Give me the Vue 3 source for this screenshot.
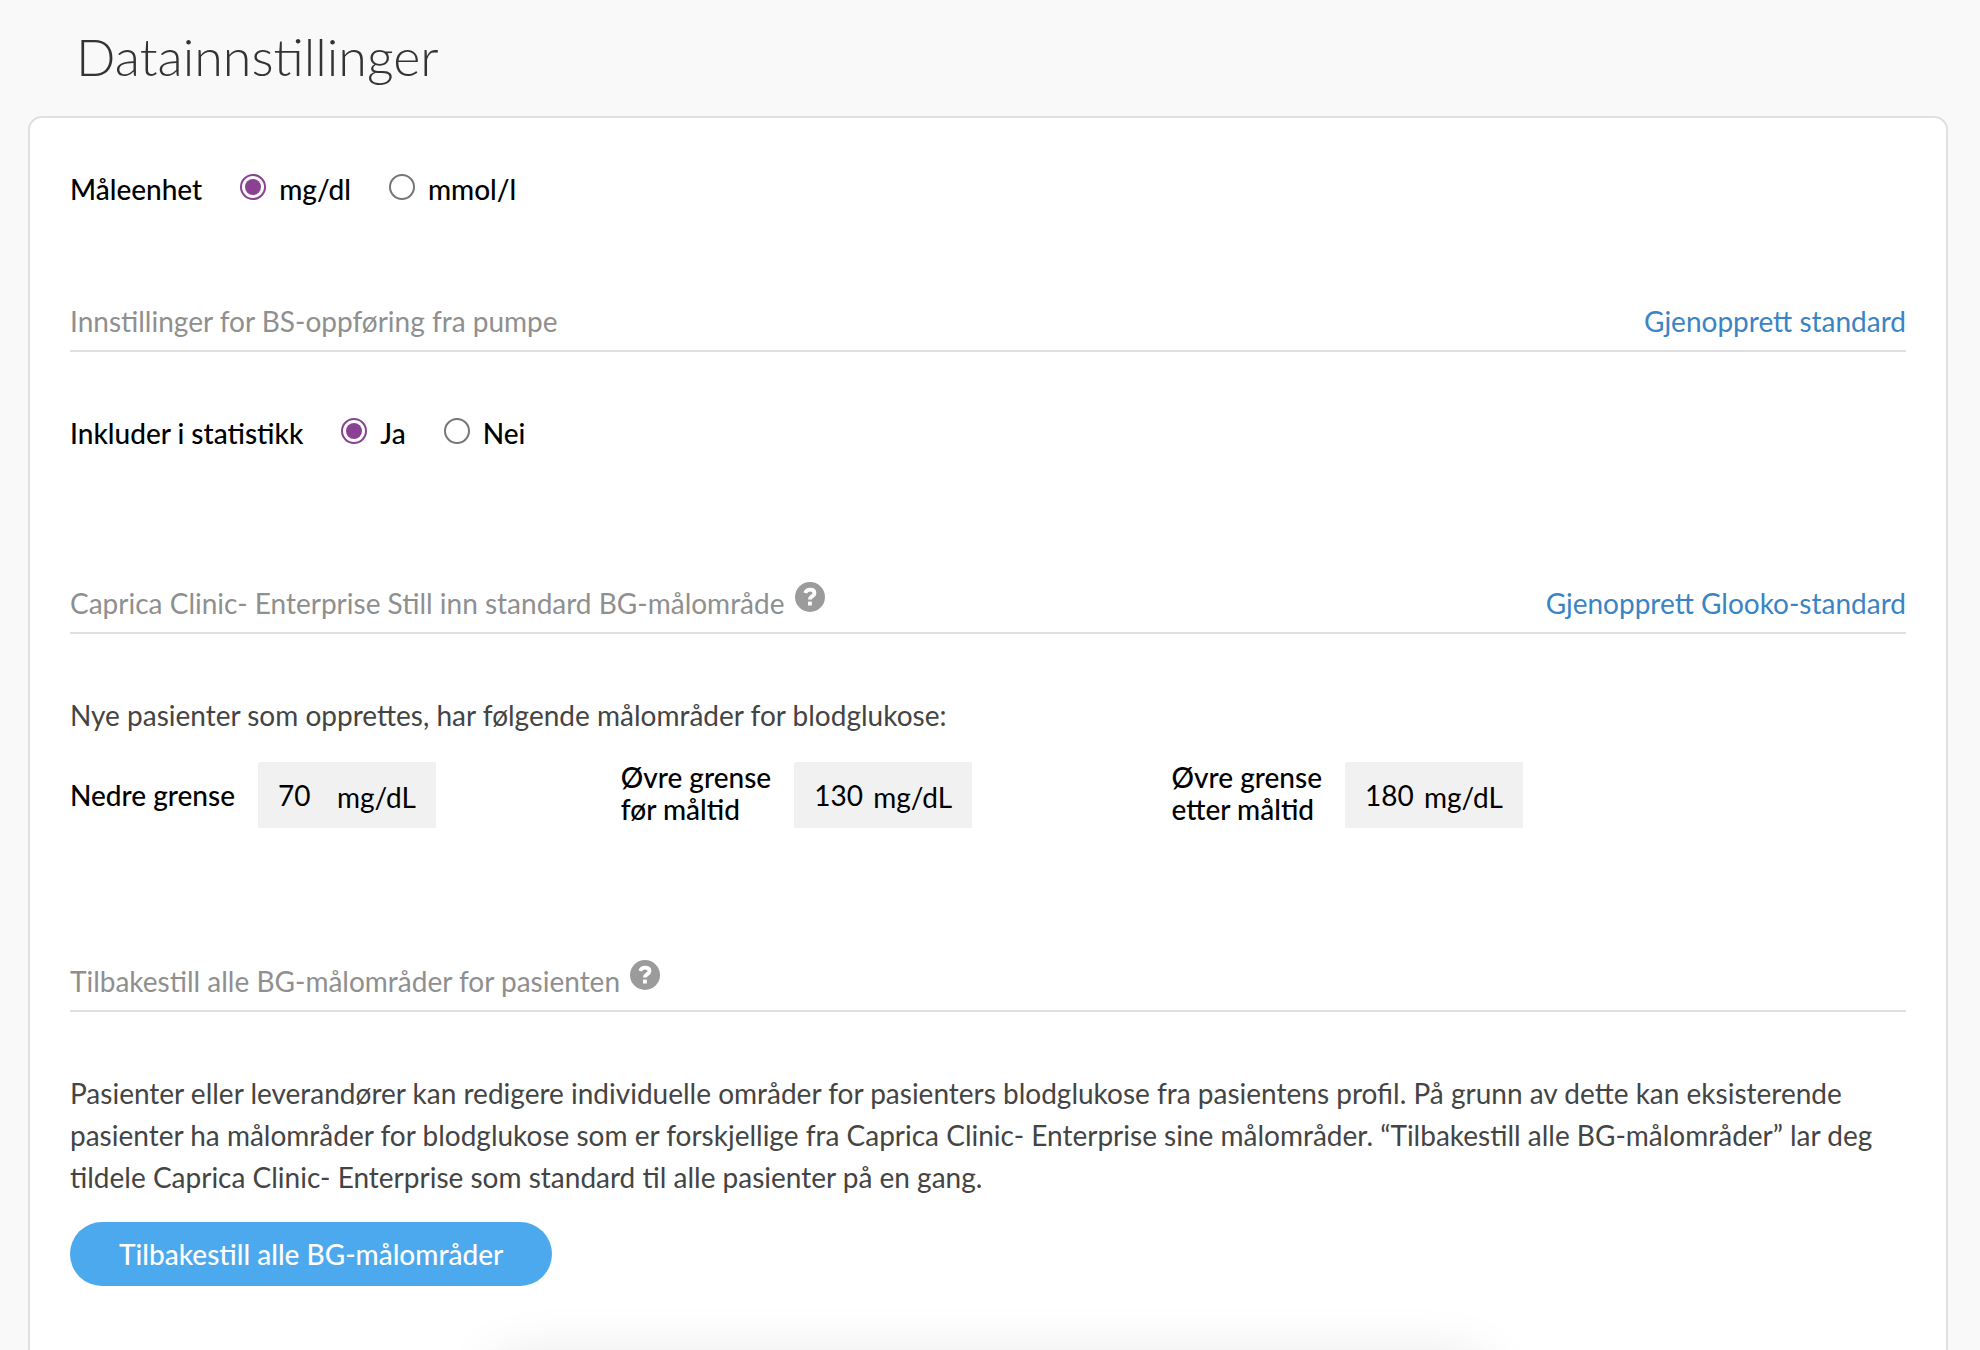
<script setup>
import { ref } from 'vue'

const unit = ref('mgdl')
const include = ref('ja')

const limits = ref([
  { id: 'lower', lines: ['Nedre grense'], value: '70' },
  { id: 'before', lines: ['Øvre grense', 'før måltid'], value: '130' },
  { id: 'after', lines: ['Øvre grense', 'etter måltid'], value: '180' }
])
</script>

<template>
  <div class="page">
    <h1 class="title">Datainnstillinger</h1>

    <main class="card">
      <div class="choices" role="radiogroup" aria-labelledby="unit-name">
        <span id="unit-name">Måleenhet</span>
        <label class="choice"><input v-model="unit" type="radio" name="unit" value="mgdl" />mg/dl</label>
        <label class="choice"><input v-model="unit" type="radio" name="unit" value="mmoll" />mmol/l</label>
      </div>

      <section class="section pump">
        <header class="section-head">
          <h2>Innstillinger for BS-oppføring fra pumpe</h2>
          <a href="#">Gjenopprett standard</a>
        </header>
        <div class="choices" role="radiogroup" aria-labelledby="include-name">
          <span id="include-name">Inkluder i statistikk</span>
          <label class="choice"><input v-model="include" type="radio" name="include" value="ja" />Ja</label>
          <label class="choice"><input v-model="include" type="radio" name="include" value="nei" />Nei</label>
        </div>
      </section>

      <section class="section">
        <header class="section-head">
          <h2>Caprica Clinic- Enterprise Still inn standard BG-målområde</h2>
          <button class="help" type="button" aria-label="Hjelp">
            <svg viewBox="0 0 30 30" aria-hidden="true">
              <circle cx="15" cy="15" r="15" fill="#9b9b9b" />
              <path d="M10.300 11C10.900 8.700 12.600 7.700 15 7.700c2.700 0 4.500 1.300 4.500 3.500 0 3-4.600 3-4.600 6.300" fill="none" stroke="#fff" stroke-width="3.800" />
              <path d="M13 19.600h3.900v3.900H13z" fill="#fff" />
            </svg>
          </button>
          <a href="#">Gjenopprett Glooko-standard</a>
        </header>
        <p class="text">Nye pasienter som opprettes, har følgende målområder for blodglukose:</p>
        <div class="limits">
          <div v-for="limit in limits" :key="limit.id" class="limit">
            <label :for="limit.id" :class="{ stacked: limit.lines.length > 1 }">
              <span v-for="line in limit.lines" :key="line">{{ line }}</span>
            </label>
            <div class="field">
              <input :id="limit.id" v-model="limit.value" type="text" inputmode="numeric" />
              <span class="unit">mg/dL</span>
            </div>
          </div>
        </div>
      </section>

      <section class="section">
        <header class="section-head">
          <h2>Tilbakestill alle BG-målområder for pasienten</h2>
          <button class="help" type="button" aria-label="Hjelp">
            <svg viewBox="0 0 30 30" aria-hidden="true">
              <circle cx="15" cy="15" r="15" fill="#9b9b9b" />
              <path d="M10.300 11C10.900 8.700 12.600 7.700 15 7.700c2.700 0 4.500 1.300 4.500 3.500 0 3-4.600 3-4.600 6.300" fill="none" stroke="#fff" stroke-width="3.800" />
              <path d="M13 19.600h3.900v3.900H13z" fill="#fff" />
            </svg>
          </button>
        </header>
        <p class="text">
          Pasienter eller leverandører kan redigere individuelle områder for pasienters blodglukose fra pasientens profil. På grunn av dette kan eksisterende pasienter ha målområder for blodglukose som er forskjellige fra Caprica Clinic- Enterprise sine målområder. “Tilbakestill alle BG-målområder” lar deg tildele Caprica Clinic- Enterprise som standard til alle pasienter på en gang.
        </p>
        <button class="reset" type="button">Tilbakestill alle BG-målområder</button>
      </section>
    </main>

    <div class="tray" aria-hidden="true"></div>
  </div>
</template>

<style>
body {
  margin: 0;
  background: #f9f9f9;
}
</style>

<style scoped>
.page {
  position: relative;
  display: flex;
  flex-direction: column;
  box-sizing: border-box;
  min-height: 100vh;
  padding: 25px 32px 0 28px;
  overflow: hidden;
  font-family: Lato, 'Liberation Sans', sans-serif;
  font-size: 28px;
  line-height: 42px;
  color: #000;
}

.title {
  margin: 0 0 29px;
  padding-left: 48px;
  font-size: 52px;
  font-weight: 300;
  line-height: 62px;
  color: #333;
}

.card {
  flex: 1;
  padding: 50px 40px 60px;
  border: 2px solid #e0e0e0;
  border-bottom: 0;
  border-radius: 14px 14px 0 0;
  background: #fff;
}

.choices {
  display: flex;
  align-items: center;
  gap: 38px;
  font-weight: 500;
}

.choice {
  display: flex;
  align-items: center;
  gap: 13px;
}

.choice input {
  appearance: none;
  display: grid;
  place-items: center;
  box-sizing: border-box;
  width: 26px;
  height: 26px;
  margin: 0 0 4px;
  border: 2px solid #767676;
  border-radius: 50%;
  background: #fff;
}

.choice input:checked {
  border-color: #8a4193;
}

.choice input:checked::before {
  content: '';
  width: 16px;
  height: 16px;
  border-radius: 50%;
  background: #8a4193;
}

.section {
  margin-top: 128px;
}

.section.pump {
  margin-top: 90px;
}

.section-head {
  display: flex;
  margin-bottom: 60px;
  padding-bottom: 8px;
  border-bottom: 2px solid #e0e0e0;
}

.section-head h2 {
  margin: 0;
  font-size: 28px;
  font-weight: 400;
  color: #8f8f8f;
}

.section-head a {
  margin-left: auto;
  color: #3b84c4;
  text-decoration: none;
}

.help {
  width: 30px;
  height: 30px;
  margin: 0 0 0 10px;
  padding: 0;
  border: 0;
  background: none;
}

.help svg {
  display: block;
  width: 30px;
  height: 30px;
}

.text {
  margin: 0 0 24px;
  color: #444;
}

.limits {
  display: flex;
  min-height: 70px;
  padding-bottom: 2px;
}

.limit {
  display: flex;
  align-items: center;
  flex: 0 0 30%;
  gap: 23px;
}

.limit label {
  font-weight: 500;
  line-height: 32px;
}

.limit label.stacked {
  padding-bottom: 4px;
}

.limit label span {
  display: block;
}

.field {
  display: flex;
  align-items: center;
  height: 66px;
  border-radius: 2px 0 0 2px;
  background: #f1f1f1;
}

.field input {
  box-sizing: border-box;
  width: 78px;
  height: 66px;
  padding: 0 0 0 20px;
  border: 0;
  background: none;
  font: inherit;
  color: #000;
}

.unit {
  box-sizing: border-box;
  width: 100px;
  padding: 4px 0 0 1px;
}

.reset {
  display: block;
  height: 64px;
  padding: 0 49px;
  border: 0;
  border-radius: 32px;
  background: #4da9ed;
  font: inherit;
  font-weight: 500;
  color: #fff;
}

.tray {
  position: absolute;
  top: 100%;
  left: 25%;
  right: 25%;
  height: 80px;
  border-radius: 24px;
  box-shadow: 0 14px 60px rgba(0, 0, 0, 0.14);
}
</style>
